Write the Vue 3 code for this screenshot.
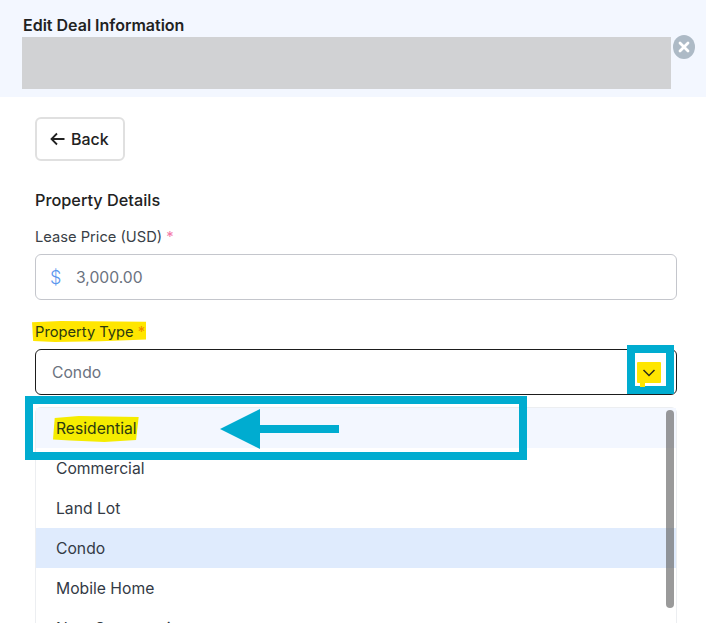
<script setup>
const options = [
  { label: 'Residential', cls: 'hover', mark: true },
  { label: 'Commercial' },
  { label: 'Land Lot' },
  { label: 'Condo', cls: 'selected' },
  { label: 'Mobile Home' },
  { label: 'New Construction' }
]
</script>

<template>
  <div class="page">
    <header class="head">
      <h1 class="title">Edit Deal Information</h1>
      <div class="redact"></div>
      <svg class="close" width="24" height="24" viewBox="0 0 24 24">
        <ellipse cx="12" cy="12" rx="11" ry="12" fill="#adbac6" />
        <path d="M8 8l8 8M16 8l-8 8" stroke="#fff" stroke-width="2.8" stroke-linecap="round" />
      </svg>
    </header>

    <main class="body">
      <button class="back">
        <svg width="15" height="14" viewBox="0 0 15 14" fill="none">
          <path d="M14.5 7H1.5M7 1.5L1.5 7 7 12.5" stroke="#222" stroke-width="1.8" />
        </svg>
        <span>Back</span>
      </button>

      <h2 class="section">Property Details</h2>

      <label class="label">Lease Price (USD) <i class="req">*</i></label>
      <div class="field price">
        <span class="dollar">$</span>
        <span class="value">3,000.00</span>
      </div>

      <label class="label type"><span class="mark-type">Property Type <i class="req warm">*</i></span></label>
      <div class="field select">
        <span class="value">Condo</span>
        <span class="chev-box">
          <span class="chev-mark">
            <svg width="14" height="8" viewBox="0 0 14 8" fill="none">
              <path d="M1.5 1L7 6.5 12.5 1" stroke="#2b2b1a" stroke-width="1.5" />
            </svg>
          </span>
        </span>
      </div>

      <div class="menu">
        <ul class="list">
          <li v-for="o in options" :key="o.label" class="opt" :class="o.cls">
            <span :class="{ 'mark-opt': o.mark }">{{ o.label }}</span>
          </li>
        </ul>
        <div class="thumb"></div>
        <div class="callout">
          <svg class="arrow" width="120" height="40" viewBox="0 0 120 40">
            <path d="M0 20L40 0v16h79v8H40v16z" fill="#00acd0" />
          </svg>
        </div>
      </div>
    </main>
  </div>
</template>

<style scoped>
.page {
  width: 706px;
  height: 623px;
  overflow: hidden;
  background: #fff;
  font-family: Inter, "Liberation Sans", sans-serif;
  color: #222;
}
.head {
  position: relative;
  height: 97px;
  box-sizing: border-box;
  padding: 15px 35px 0 22px;
  background: #f3f7ff;
}
.title {
  margin: 0 0 2px 1px;
  font-size: 16px;
  line-height: 20px;
  font-weight: 600;
  color: #222;
}
.redact {
  width: 649px;
  height: 52px;
  background: #d1d2d4;
}
.close {
  position: absolute;
  left: 672px;
  top: 35px;
}
.body {
  padding: 20px 29px 0 35px;
}
.back {
  display: flex;
  align-items: center;
  gap: 6px;
  width: 90px;
  height: 44px;
  padding: 0 0 0 13px;
  box-sizing: border-box;
  border: 2px solid #e0e0e0;
  border-radius: 6px;
  background: #fff;
  font: 500 16px Inter, "Liberation Sans", sans-serif;
  color: #222;
}
.section {
  margin: 29px 0 0;
  font-size: 16.3px;
  line-height: 20px;
  font-weight: 500;
  color: #222;
}
.label {
  display: block;
  margin-top: 17px;
  font-size: 14.7px;
  line-height: 20px;
  color: #3a3f47;
}
.label.type {
  margin-top: 21px;
}
.req {
  font-style: normal;
  color: #f47ba8;
}
.req.warm {
  color: #f08a00;
}
.mark-type {
  display: inline-block;
  margin-left: -3px;
  padding: 1px 1px 0 3px;
  background: #ffe600;
  clip-path: polygon(0 6%, 25% 0, 100% 4%, 100% 88%, 60% 97%, 20% 100%, 1% 95%);
  color: #2c3a10;
}
.field {
  display: flex;
  align-items: center;
  height: 46px;
  box-sizing: border-box;
  margin-top: 7px;
  border: 1px solid #c4c6cc;
  border-radius: 6px;
  font-size: 16px;
}
.price {
  padding-left: 14px;
}
.dollar {
  width: 26px;
  font-size: 18px;
  font-weight: 300;
  color: #5b97ee;
}
.value {
  color: #6b7280;
  font-size: 15.7px;
}
.select {
  position: relative;
  margin-top: 7px;
  padding-left: 16px;
  border-color: #1d1d1d;
}
.chev-box {
  position: absolute;
  left: 591px;
  top: -5px;
  width: 47px;
  height: 49px;
  box-sizing: border-box;
  border: 8px solid #00acd0;
  background: #fff;
}
.chev-mark {
  position: relative;
  display: flex;
  align-items: center;
  justify-content: center;
  width: 24px;
  height: 21px;
  margin: 9px 0 0 2px;
  background: #ffe600;
  border-radius: 1px;
}
.chev-mark::after {
  content: "";
  position: absolute;
  left: 3px;
  top: 21px;
  width: 5px;
  height: 4px;
  background: #ffe600;
}
.menu {
  position: relative;
  width: 642px;
  height: 230px;
  margin-top: 12px;
  box-sizing: border-box;
  border: 1px solid #eceef1;
  border-radius: 6px 6px 0 0;
}
.list {
  list-style: none;
  margin: 0;
  padding: 0;
}
.opt {
  height: 40px;
  padding-left: 20px;
  font-size: 15.7px;
  line-height: 41px;
  color: #333a45;
}
.opt.hover {
  background: #f3f7ff;
}
.opt.selected {
  background: #dfebfd;
}
.mark-opt {
  display: inline-block;
  margin-left: -3px;
  padding: 0 2px 0 3px;
  line-height: 26px;
  background: #f5ec00;
  clip-path: polygon(2% 8%, 30% 0, 100% 4%, 97% 92%, 60% 100%, 20% 94%, 0 90%);
  color: #2c3a10;
}
.thumb {
  position: absolute;
  left: 630px;
  top: 2px;
  width: 8px;
  height: 198px;
  border-radius: 4px;
  background: rgba(100, 100, 100, 0.65);
}
.callout {
  position: absolute;
  left: -11px;
  top: -12px;
  width: 502px;
  height: 64px;
  box-sizing: border-box;
  border: 8px solid #00acd0;
}
.arrow {
  position: absolute;
  left: 187px;
  top: 5px;
}
</style>
